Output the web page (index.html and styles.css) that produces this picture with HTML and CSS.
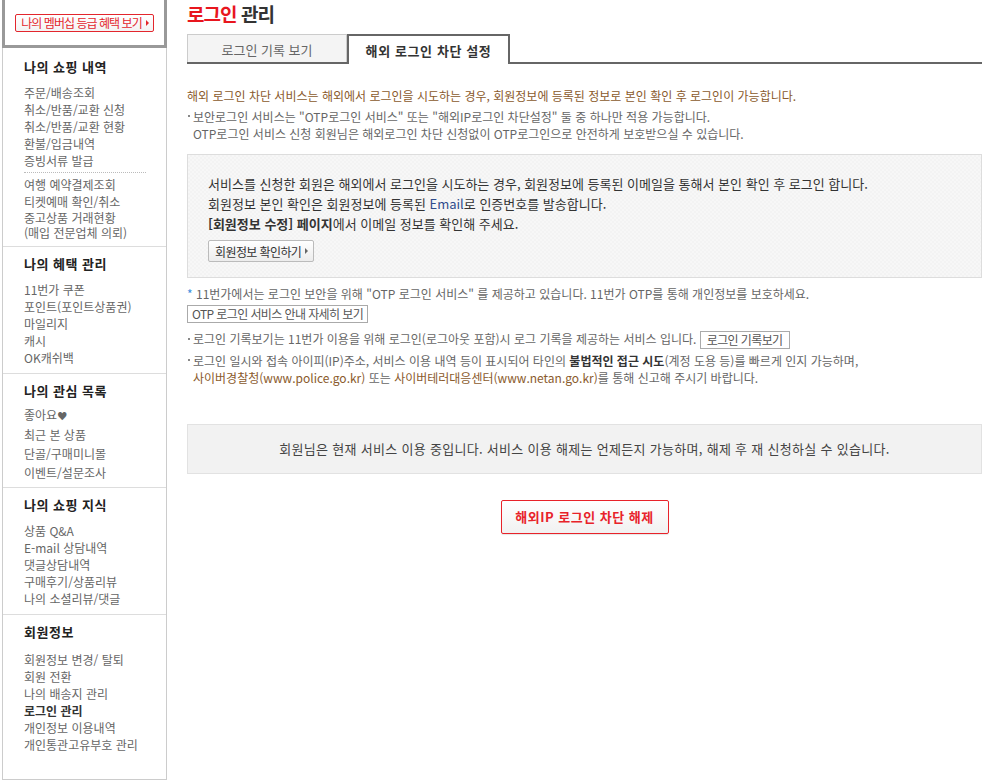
FILE: index.html
```html
<!DOCTYPE html>
<html lang="ko">
<head>
    <meta charset="UTF-8">
    <title>로그인 관리</title>
    <link rel="stylesheet" href="styles.css">
</head>
<body>

<div class="wrap">
    <aside class="side">
        <div class="side-top">
            <a class="btn-member" href="#">나의 멤버십 등급 혜택 보기<i class="arr"></i></a>
        </div>
        <div class="side-menu">
            <div class="side-sec first">
                <h3>나의 쇼핑 내역</h3>
                <ul>
                    <li>주문/배송조회</li>
                    <li>취소/반품/교환 신청</li>
                    <li>취소/반품/교환 현황</li>
                    <li>환불/입금내역</li>
                    <li>증빙서류 발급</li>
                </ul>
                <div class="dot-line"></div>
                <ul>
                    <li>여행 예약결제조회</li>
                    <li>티켓예매 확인/취소</li>
                    <li class="two-line">중고상품 거래현황<br>(매입 전문업체 의뢰)</li>
                </ul>
            </div>
            <div class="side-sec">
                <h3>나의 혜택 관리</h3>
                <ul>
                    <li>11번가 쿠폰</li>
                    <li>포인트(포인트상품권)</li>
                    <li>마일리지</li>
                    <li>캐시</li>
                    <li>OK캐쉬백</li>
                </ul>
            </div>
            <div class="side-sec wide">
                <h3>나의 관심 목록</h3>
                <ul>
                    <li>좋아요<span class="heart">♥</span></li>
                    <li>최근 본 상품</li>
                    <li>단골/구매미니몰</li>
                    <li>이벤트/설문조사</li>
                </ul>
            </div>
            <div class="side-sec">
                <h3>나의 쇼핑 지식</h3>
                <ul>
                    <li>상품 Q&amp;A</li>
                    <li>E-mail 상담내역</li>
                    <li>댓글상담내역</li>
                    <li>구매후기/상품리뷰</li>
                    <li>나의 소셜리뷰/댓글</li>
                </ul>
            </div>
            <div class="side-sec last">
                <h3>회원정보</h3>
                <ul>
                    <li>회원정보 변경/ 탈퇴</li>
                    <li>회원 전환</li>
                    <li>나의 배송지 관리</li>
                    <li class="cur">로그인 관리</li>
                    <li>개인정보 이용내역</li>
                    <li>개인통관고유부호 관리</li>
                </ul>
            </div>
        </div>
    </aside>

    <main class="main">
        <h2 class="title"><span class="red">로그인</span> 관리</h2>

        <div class="tabs">
            <a class="tab" href="#">로그인 기록 보기</a>
            <a class="tab on" href="#">해외 로그인 차단 설정</a>
        </div>

        <p class="intro">해외 로그인 차단 서비스는 해외에서 로그인을 시도하는 경우, 회원정보에 등록된 정보로 본인 확인 후 로그인이 가능합니다.</p>
        <ul class="info-list">
            <li>보안로그인 서비스는 "OTP로그인 서비스" 또는 "해외IP로그인 차단설정" 둘 중 하나만 적용 가능합니다.<br>OTP로그인 서비스 신청 회원님은 해외로그인 차단 신청없이 OTP로그인으로 안전하게 보호받으실 수 있습니다.</li>
        </ul>

        <div class="notice-box">
            <p>서비스를 신청한 회원은 해외에서 로그인을 시도하는 경우, 회원정보에 등록된 이메일을 통해서 본인 확인 후 로그인 합니다.</p>
            <p>회원정보 본인 확인은 회원정보에 등록된 <span class="en">Email</span>로 인증번호를 발송합니다.</p>
            <p><strong>[회원정보 수정] 페이지</strong>에서 이메일 정보를 확인해 주세요.</p>
            <a class="btn-gray" href="#">회원정보 확인하기<i class="arr"></i></a>
        </div>

        <p class="star-line"><span class="star">*</span> 11번가에서는 로그인 보안을 위해 "OTP 로그인 서비스" 를 제공하고 있습니다. 11번가 OTP를 통해 개인정보를 보호하세요.</p>
        <a class="btn-line" href="#">OTP 로그인 서비스 안내 자세히 보기</a>

        <ul class="info-list lower">
            <li class="with-btn">로그인 기록보기는 11번가 이용을 위해 로그인(로그아웃 포함)시 로그 기록을 제공하는 서비스 입니다. <a class="btn-line" href="#">로그인 기록보기</a></li>
            <li>로그인 일시와 접속 아이피(IP)주소, 서비스 이용 내역 등이 표시되어 타인의 <strong>불법적인 접근 시도</strong>(계정 도용 등)를 빠르게 인지 가능하며,<br><span class="brown">사이버경찰청(www.police.go.kr)</span> 또는 <span class="brown">사이버테러대응센터(www.netan.go.kr)</span>를 통해 신고해 주시기 바랍니다.</li>
        </ul>

        <div class="status-box">회원님은 현재 서비스 이용 중입니다. 서비스 이용 해제는 언제든지 가능하며, 해제 후 재 신청하실 수 있습니다.</div>

        <div class="btn-area">
            <a class="btn-red" href="#">해외IP 로그인 차단 해제</a>
        </div>
    </main>
</div>

</body>
</html>
```

FILE: styles.css
```css
* {
    box-sizing: border-box;
}

body {
    margin: 0;
    background: #fff;
    font-family: "Noto Sans CJK KR", sans-serif;
    font-size: 12px;
    color: #666;
}

ul {
    list-style: none;
    margin: 0;
    padding: 0;
}

p {
    margin: 0;
}

a {
    color: inherit;
    text-decoration: none;
}

.wrap {
    display: flex;
    align-items: flex-start;
    padding-left: 2px;
}

/* left menu */
.side {
    width: 165px;
    flex: none;
}

.side-top {
    height: 48px;
    border: 3px solid #999;
    border-top: 0;
    display: flex;
    justify-content: center;
    align-items: flex-start;
    padding-top: 14px;
}

.btn-member {
    display: inline-flex;
    align-items: center;
    height: 18px;
    padding: 0 4px 0 5px;
    border: 1px solid #e3262d;
    border-radius: 2px;
    background: linear-gradient(#fff, #f3f3f3);
    color: #e3262d;
    line-height: 16px;
    letter-spacing: -0.08em;
}

.arr {
    display: inline-block;
    width: 0;
    height: 0;
    margin-left: 4px;
    border-left: 3px solid #666;
    border-top: 3px solid transparent;
    border-bottom: 3px solid transparent;
}

.btn-member .arr {
    border-left-color: #e3262d;
}

.side-menu {
    border: 1px solid #ccc;
    border-top: 0;
}

.side-sec {
    padding: 8px 0 7px 21px;
    border-top: 1px solid #ddd;
}

.side-sec.first {
    border-top: 0;
    padding-top: 10px;
    padding-bottom: 6px;
}

.side-sec h3 {
    margin: 0 0 9px;
    font-size: 13px;
    line-height: 17px;
    letter-spacing: 0.5px;
    color: #222;
    font-weight: bold;
}

.side-sec li {
    line-height: 17px;
}

.side-sec li.two-line {
    line-height: 15px;
}

.side-sec.wide h3 {
    margin-bottom: 6px;
}

.side-sec.wide li {
    line-height: 19px;
}

.side-sec.wide {
    padding-bottom: 5px;
}

.heart {
    font-size: 10px;
    color: #666;
}

.side-sec.last h3 {
    margin-bottom: 11px;
}

.side-sec.last {
    padding-bottom: 26px;
}

.side-sec li.cur {
    color: #333;
    font-weight: bold;
}

.dot-line {
    width: 122px;
    margin: 3px 0;
    border-top: 1px dotted #bbb;
}

/* content */
.main {
    flex: 1;
    margin: 0 8px 0 20px;
}

.title {
    margin: 2px 0 0;
    font-size: 19px;
    line-height: 24px;
    letter-spacing: -0.05em;
    color: #333;
    font-weight: bold;
}

.title .red {
    color: #e8161e;
}

.tabs {
    display: flex;
    height: 30px;
    margin-top: 8px;
    border-bottom: 2px solid #666;
}

.tab {
    width: 160px;
    height: 28px;
    padding-top: 3px;
    border: 1px solid #ccc;
    border-bottom: 0;
    background: #f4f4f4;
    text-align: center;
    font-size: 13px;
    line-height: 24px;
    color: #666;
}

.tab.on {
    width: 163px;
    height: 30px;
    margin-bottom: -2px;
    border: 2px solid #666;
    border-bottom: 0;
    background: #fff;
    color: #333;
    font-weight: bold;
    letter-spacing: 0.6px;
}

.intro {
    margin-top: 23px;
    line-height: 17px;
    color: #8a5a2c;
}

.info-list {
    margin-top: 4px;
}

.info-list li {
    position: relative;
    padding-left: 6px;
    line-height: 17px;
}

.info-list li:before {
    content: '';
    position: absolute;
    left: 1px;
    top: 7px;
    width: 2px;
    height: 2px;
    background: #888;
}

.notice-box {
    margin-top: 12px;
    padding: 19px 20px 15px;
    border: 1px solid #ddd;
    background-color: #f7f7f7;
    background-image: linear-gradient(45deg, #f3f3f3 25%, transparent 25%, transparent 75%, #f3f3f3 75%),
        linear-gradient(45deg, #f3f3f3 25%, transparent 25%, transparent 75%, #f3f3f3 75%);
    background-size: 4px 4px;
    background-position: 0 0, 2px 2px;
    font-size: 13px;
    color: #333;
}

.notice-box p {
    line-height: 20px;
}

.notice-box .en {
    color: #2f4c8c;
}

.notice-box strong {
    color: #333;
}

.btn-gray {
    display: inline-flex;
    align-items: center;
    height: 22px;
    margin-top: 6px;
    padding: 0 5px 0 6px;
    border: 1px solid #bbb;
    border-radius: 2px;
    background: linear-gradient(#fff, #ececec);
    font-size: 12px;
    letter-spacing: -0.05em;
    color: #333;
}

.star-line {
    margin-top: 7px;
    line-height: 17px;
}

.star {
    color: #3e8ede;
}

.btn-line {
    display: inline-block;
    height: 18px;
    margin-top: 2px;
    padding: 0 4px;
    border: 1px solid #aaa;
    background: #fff;
    line-height: 16px;
    letter-spacing: -0.05em;
    color: #555;
    vertical-align: middle;
}

.info-list.lower {
    margin-top: 7px;
}

.info-list li.with-btn {
    line-height: 18px;
    margin-bottom: 3px;
}

.info-list li.with-btn:before {
    top: 8px;
}

.info-list li.with-btn .btn-line {
    margin-top: 0;
    padding: 0 6px;
}

.info-list strong {
    color: #333;
}

.brown {
    color: #8a5a2c;
}

.status-box {
    margin-top: 38px;
    height: 50px;
    border: 1px solid #e2e2e2;
    background: #f2f2f2;
    text-align: center;
    font-size: 13px;
    line-height: 48px;
    letter-spacing: 0.3px;
    color: #444;
}

.btn-area {
    margin-top: 26px;
    text-align: center;
}

.btn-red {
    display: inline-block;
    width: 168px;
    height: 34px;
    border: 1px solid #e8232a;
    border-radius: 2px;
    background: linear-gradient(#fff, #f1f1f1);
    box-shadow: 0 1px 1px rgba(0, 0, 0, 0.1);
    line-height: 32px;
    font-size: 13px;
    font-weight: bold;
    letter-spacing: 0.5px;
    color: #e8232a;
}
```
